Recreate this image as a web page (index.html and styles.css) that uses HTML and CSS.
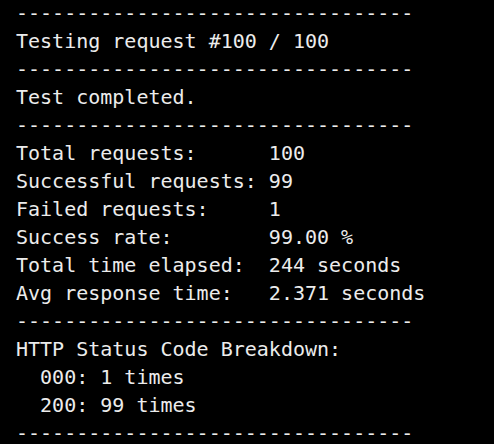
FILE: index.html
```html
<!DOCTYPE html>
<html lang="en">
<head>
<meta charset="utf-8">
<title>Test output</title>
<link rel="stylesheet" href="styles.css">
</head>
<body>
<pre class="term">---------------------------------
Testing request #100 / 100
---------------------------------
Test completed.
---------------------------------
Total requests:      100
Successful requests: 99
Failed requests:     1
Success rate:        99.00 %
Total time elapsed:  244 seconds
Avg response time:   2.371 seconds
---------------------------------
HTTP Status Code Breakdown:
  000: 1 times
  200: 99 times
---------------------------------</pre>
</body>
</html>
```
FILE: styles.css
```css
html, body {
  margin: 0;
  padding: 0;
  background: #000;
  height: 100%;
  overflow: hidden;
}
.term {
  margin: -1px 0 0 16px;
  font-family: "DejaVu Sans Mono", monospace;
  font-size: 20px;
  line-height: 28px;
  color: #ececec;
  white-space: pre;
}
```
